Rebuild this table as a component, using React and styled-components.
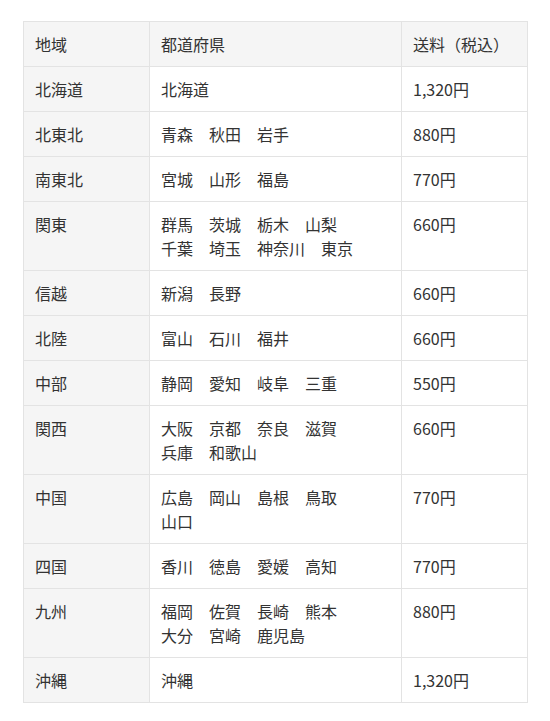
import React from "react";
import styled, { createGlobalStyle } from "styled-components";

const Global = createGlobalStyle`
  html, body { margin: 0; padding: 0; background: #fff; }
  body { font-family: "Noto Sans CJK JP", "Noto Sans", sans-serif; color: #333; }
`;

const Wrap = styled.div`
  padding: 21px 23px;
`;

const Table = styled.table`
  width: 504px;
  border-collapse: collapse;
  table-layout: fixed;
  font-size: 16px;
  line-height: 24px;
`;

const Th = styled.th`
  background: #f5f5f5;
  border: 1px solid #e3e3e3;
  padding: 10px 11px;
  text-align: left;
  font-weight: normal;
  vertical-align: top;
`;

const Td = styled.td`
  background: ${(p) => (p.$head ? "#f5f5f5" : "#fff")};
  border: 1px solid #e3e3e3;
  padding: 10px 11px;
  vertical-align: top;
  text-align: left;
`;

const Line = styled.div`
  white-space: nowrap;
`;

const rows = [
  ["北海道", ["北海道"], "1,320円"],
  ["北東北", ["青森　秋田　岩手"], "880円"],
  ["南東北", ["宮城　山形　福島"], "770円"],
  ["関東", ["群馬　茨城　栃木　山梨", "千葉　埼玉　神奈川　東京"], "660円"],
  ["信越", ["新潟　長野"], "660円"],
  ["北陸", ["富山　石川　福井"], "660円"],
  ["中部", ["静岡　愛知　岐阜　三重"], "550円"],
  ["関西", ["大阪　京都　奈良　滋賀", "兵庫　和歌山"], "660円"],
  ["中国", ["広島　岡山　島根　鳥取", "山口"], "770円"],
  ["四国", ["香川　徳島　愛媛　高知"], "770円"],
  ["九州", ["福岡　佐賀　長崎　熊本", "大分　宮崎　鹿児島"], "880円"],
  ["沖縄", ["沖縄"], "1,320円"],
];

export default function App() {
  return (
    <>
      <Global />
      <Wrap>
        <Table>
          <colgroup>
            <col style={{ width: 126 }} />
            <col style={{ width: 252 }} />
            <col style={{ width: 126 }} />
          </colgroup>
          <thead>
            <tr>
              <Th>地域</Th>
              <Th>都道府県</Th>
              <Th>送料（税込）</Th>
            </tr>
          </thead>
          <tbody>
            {rows.map(([area, prefs, price]) => (
              <tr key={area}>
                <Td $head>{area}</Td>
                <Td>
                  {prefs.map((l) => (
                    <Line key={l}>{l}</Line>
                  ))}
                </Td>
                <Td>{price}</Td>
              </tr>
            ))}
          </tbody>
        </Table>
      </Wrap>
    </>
  );
}
